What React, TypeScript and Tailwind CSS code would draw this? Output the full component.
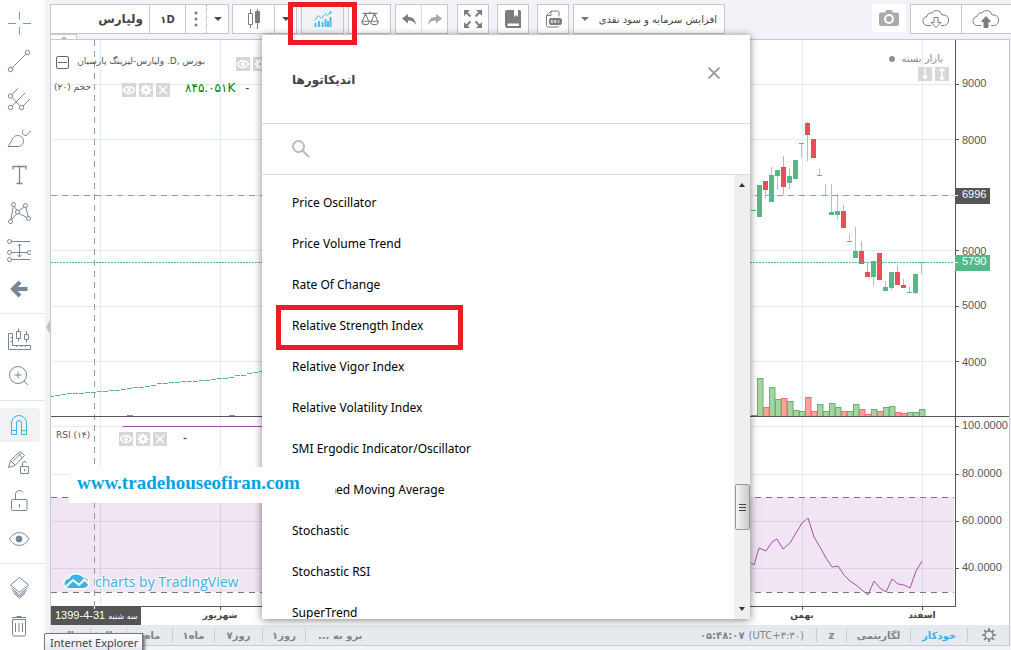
import React from "react";

type Candle = [body: [number, number], wick: [number, number] | null, up: boolean];

const candles: Candle[] = [
  [[210, 211], null, true],
  [[185, 217], null, true],
  [[181, 190], [181, 198], false],
  [[175, 202], [167, 202], true],
  [[170, 176], [170, 190], true],
  [[167, 187], [156, 195], false],
  [[176, 183], [168, 189], true],
  [[160, 179], null, true],
  [[143, 144], [143, 158], true],
  [[123, 135], [122, 161], false],
  [[139, 158], null, false],
  [[175, 176], [168, 176], true],
  [[195, 196], [184, 196], true],
  [[212, 215], [184, 215], true],
  [[211, 215], [194, 220], true],
  [[211, 228], [205, 228], false],
  [[241, 242], [234, 242], true],
  [[251, 258], [227, 258], true],
  [[251, 264], [241, 264], false],
  [[272, 277], [263, 277], false],
  [[261, 277], [261, 286], true],
  [[253, 280], null, false],
  [[287, 291], [281, 291], true],
  [[272, 288], [272, 290], true],
  [[272, 285], [266, 285], false],
  [[285, 288], [279, 288], false],
  [[292, 293], [287, 293], true],
  [[274, 293], [274, 294], true],
  [[262, 263], [262, 274], true],
];

const volumes: [number, boolean][] = [
  [415, true], [378, true], [407, false], [387, true], [399, true], [398, false], [401, true],
  [410, true], [411, true], [397, false], [411, false], [404, true], [411, true], [403, true],
  [407, true], [411, false], [411, true], [404, true], [409, false], [414, false], [409, true],
  [411, false], [407, true], [406, true], [412, false], [413, false], [412, true], [412, true],
  [409, true],
];

const trend = [
  396, 395, 394, 393, 393, 393, 392, 392, 391, 391, 390, 390, 389, 388, 387, 387, 386, 385, 383, 383,
  382, 382, 381, 381, 381, 380, 380, 379, 378, 378, 377, 375, 375, 373, 372, 371,
];

const rsi: [number, number][] = [
  [751, 563], [754, 565], [759, 548], [766, 551], [772, 542], [777, 539], [783, 549], [790, 543],
  [796, 533], [802, 523], [808, 518], [814, 537], [820, 547], [826, 558], [832, 567], [838, 566],
  [844, 575], [850, 581], [856, 585], [862, 590], [868, 595], [874, 581], [880, 588], [886, 592],
  [892, 579], [898, 584], [904, 585], [910, 588], [916, 571], [922, 561],
];

const indicators = [
  "Price Oscillator",
  "Price Volume Trend",
  "Rate Of Change",
  "Relative Strength Index",
  "Relative Vigor Index",
  "Relative Volatility Index",
  "SMI Ergodic Indicator/Oscillator",
  "Smoothed Moving Average",
  "Stochastic",
  "Stochastic RSI",
  "SuperTrend",
];

const fa = "font-['DejaVu_Sans',sans-serif]";

function Chart() {
  return (
    <svg
      viewBox="51 40 958 585"
      preserveAspectRatio="xMinYMin slice"
      className="block h-full w-full"
      role="img"
      aria-label="Price chart"
    >
      <g fill="#e0ebf2">
        {[100, 220, 802, 922].map((x) => (
          <rect key={x} x={x} y="40" width="1" height="565" />
        ))}
        {[84, 139, 195, 250, 306, 361, 426, 474, 521, 568].map((y) => (
          <rect key={y} x="52" y={y} width="901" height="1" />
        ))}
      </g>
      <rect x="51" y="497" width="903" height="95" fill="#96329f" fillOpacity="0.13" />
      <g stroke="#777" strokeDasharray="6 5">
        <path d="M51 497.5H954" />
        <path d="M51 592.5H954" />
      </g>
      {trend.map((y, i) => (
        <rect key={i} x={49 + i * 6} y={y} width="5" height="1" fill="#53b987" />
      ))}
      <g fill="#69b269">
        <rect x="127" y="415" width="6" height="1" />
        <rect x="229" y="415" width="6" height="1" />
      </g>
      {volumes.map(([y, up], i) => (
        <rect
          key={i}
          x={751.5 + i * 6}
          y={y + 0.5}
          width="5.5"
          height={416 - y}
          fill={up ? "#a6d3a6" : "#ff9f9f"}
          stroke={up ? "#69b269" : "#ff6b6b"}
        />
      ))}
      {candles.map(([body, wick, up], i) => (
        <g key={i}>
          {wick && (
            <rect
              x={753 + i * 6}
              y={wick[0]}
              width="1"
              height={wick[1] - wick[0]}
              fill={up ? "#a4c9cc" : "#f0a0ac"}
            />
          )}
          <rect
            x={751 + i * 6}
            y={body[0]}
            width="5"
            height={body[1] - body[0]}
            fill={up ? "#53b987" : "#eb4d5c"}
          />
        </g>
      ))}
      <path d="M51 262.5H954" stroke="#53b987" strokeDasharray="2 1" />
      <g stroke="#999" strokeDasharray="6 5">
        <path d="M51 195.5H954" />
        <path d="M94.5 40V606" />
      </g>
      <rect x="123" y="426" width="140" height="1" fill="#a24aa8" />
      <polyline points={rsi.map((p) => p.join(",")).join(" ")} fill="none" stroke="#a94fb0" />
      <g fill="#555">
        <rect x="51" y="416" width="958" height="1" />
        <rect x="51" y="606" width="905" height="1" />
        <rect x="955" y="40" width="1" height="567" />
        {[84, 139, 250, 306, 361, 426, 474, 521, 568].map((y) => (
          <rect key={y} x="956" y={y} width="3" height="1" />
        ))}
        {[220, 802, 922].map((x) => (
          <rect key={x} x={x} y="607" width="1" height="3" />
        ))}
        <rect x="955" y="188" width="35" height="16" />
        <rect x="51" y="606" width="90" height="19" />
      </g>
      <rect x="955" y="255" width="35" height="16" fill="#53b987" />
      <g fill="#fff">
        <rect x="955" y="195" width="3" height="1" />
        <rect x="955" y="262" width="3" height="1" />
        <rect x="94" y="606" width="1" height="3" />
      </g>
      <g fontFamily="Liberation Sans, sans-serif" fontSize="11" fill="#555">
        {[
          ["9000", 87], ["8000", 144], ["6000", 255], ["5000", 309], ["4000", 366],
          ["100.0000", 429], ["80.0000", 477], ["60.0000", 524], ["40.0000", 571],
        ].map(([t, y]) => (
          <text key={t} x="962" y={y}>{t}</text>
        ))}
        <text x="962" y="198" fill="#fff">6996</text>
        <text x="962" y="265" fill="#fff">5790</text>
        <text x="55" y="619" fill="#fff">1399-4-31</text>
      </g>
      <g fontFamily="DejaVu Sans, sans-serif" fontSize="10" textAnchor="middle" fill="#444">
        <text x="123" y="619" fontSize="8" fill="#fff">سه شنبه</text>
        <g fontWeight="bold" fontSize="9">
          <text x="220" y="618">شهریور</text>
          <text x="802" y="618">بهمن</text>
          <text x="922" y="618">اسفند</text>
        </g>
      </g>
      <g stroke="#fff" strokeWidth="3" strokeLinejoin="round" paintOrder="stroke" fill="#3bb3e4">
        <path d="M69 588a4.500 4.500 0 0 1 0-9 8 7 0 0 1 14-1.500 5.300 5.300 0 0 1 1 10.500z" />
        <text x="95" y="587" fontFamily="Open Sans, sans-serif" fontSize="14" strokeOpacity="0.5">
          charts by TradingView
        </text>
      </g>
      <path d="M66 586.500l7-6.500 6 5 5.500-5.500 4 4" fill="none" stroke="#fff" strokeWidth="2" />
    </svg>
  );
}

type IconProps = { children: React.ReactNode; className?: string };

function Icon({ children, className = "h-6 w-6" }: IconProps) {
  return (
    <svg viewBox="0 0 24 24" fill="none" stroke="currentColor" className={className} aria-hidden="true">
      {children}
    </svg>
  );
}

function Tool({ label, active, children }: { label: string; active?: boolean; children: React.ReactNode }) {
  return (
    <button
      type="button"
      aria-label={label}
      className={
        active
          ? "flex h-[34px] w-10 items-center justify-center rounded-r-sm bg-[#f1f2f4] my-0.5 pr-0.5 text-[#3bb3e4]"
          : "flex h-[38px] w-10 items-center justify-center pr-0.5 text-[#758696]"
      }
    >
      <Icon>{children}</Icon>
    </button>
  );
}

function Divider() {
  return <div className="my-[5px] h-px bg-[#dfe8ef]" />;
}

function Sidebar() {
  return (
    <aside className="flex w-[45px] shrink-0 flex-col bg-white pt-1">
      <Tool label="Cross">
        <path d="M12.500 .5v8M12.500 16v8M1 12.500h8M16 12.500h8" stroke="#3bb3e4" />
      </Tool>
      <Tool label="Trend line">
        <circle cx="3.500" cy="20.500" r="2.200" />
        <circle cx="20.500" cy="3.500" r="2.200" />
        <path d="M5.200 18.800L18.800 5.200" />
      </Tool>
      <Tool label="Pitchfork">
        <circle cx="3.500" cy="9" r="2.200" />
        <circle cx="3.500" cy="20.500" r="2.200" />
        <circle cx="14.500" cy="20.500" r="2.200" />
        <path d="M5.200 7.200L11.500 1M5.200 10.700l7.600 8M5.200 18.800L18 6M16.200 18.800L23 12" />
      </Tool>
      <Tool label="Brush">
        <path d="M1 21.500C5 17 5 10.500 10.500 10.500a5.500 5.500 0 0 1 1 11zM16 5.500c-2 2 .5 5.500 3 5l6.500-6M16 5.500l1-1" />
      </Tool>
      <Tool label="Text">
        <path d="M6 6.500V3.500h13v3M12.500 3.500v17M9.500 20.500h6" strokeWidth="1.300" />
      </Tool>
      <Tool label="Patterns">
        <circle cx="6.500" cy="3.500" r="2" />
        <circle cx="18.500" cy="4.500" r="2" />
        <circle cx="10.500" cy="11" r="2" />
        <circle cx="3.500" cy="20.500" r="2" />
        <circle cx="21.500" cy="17.500" r="2" />
        <path d="M6.200 5.500L4 18.500M7.500 5.300l2.200 4M12 9.700l5-4M18.900 6.500l2.200 9M12 12.500l7.800 4M9.600 12.700l-5 6" />
      </Tool>
      <Tool label="Forecasting">
        <circle cx="2.500" cy="2.500" r="2" />
        <circle cx="2.500" cy="13.500" r="2" />
        <circle cx="22.500" cy="13.500" r="2" />
        <circle cx="2.500" cy="20.500" r="2" />
        <path d="M4.500 2.500H23M4.500 13.500h16M4.500 20.500H23M12.500 5v13M10.500 7l2-2 2 2M10.500 16l2 2 2-2" />
      </Tool>
      <Tool label="Back">
        <path d="M13 5l-7 7 7 7M7 12h13.500" strokeWidth="4" />
      </Tool>
      <Divider />
      <Tool label="Measure">
        <path d="M1.500 7.500h4v12h18v4h-22zM3.500 11.500h2M3.500 15.500h2M9.500 21v-2M14.500 21v-2M18.500 21v-2M9.500 5.500h4v7h-4zM11.500 2.500v3M11.500 12.500v3M17.500 8.500h4v5h-4zM19.500 5v3.500M19.500 13.500v3" />
      </Tool>
      <Tool label="Zoom in">
        <circle cx="11" cy="11" r="8.500" />
        <path d="M11 7.500v7M7.500 11h7M17 17l4 4" />
      </Tool>
      <Divider />
      <Tool label="Magnet" active>
        <path d="M4.500 21.500V10a7.500 7.500 0 0 1 15 0v11.500h-5V10a2.500 2.500 0 0 0-5 0v11.500zM4.500 17.500h5M14.500 17.500h5" />
      </Tool>
      <Tool label="Keep drawing">
        <path d="M1.500 16.500l2-7L13 .5l4.500 4-9.500 10zM3.500 9.500L8 14M11 2.500L15.500 7M6 10l8-7.500" />
        <path d="M13.500 15.500h8v7h-8zM15.500 15.500V13a2 2 0 0 1 4-1M17.500 18v2" />
      </Tool>
      <Tool label="Lock">
        <rect x="4.500" y="10.500" width="15.500" height="11" rx="1" />
        <path d="M8.500 10.500V5a4 4 0 0 1 7.500-1.500M12.500 15v3.500" />
      </Tool>
      <Tool label="Hide">
        <path d="M2.500 12c5-8.500 14.500-8.500 19.500 0-5 8.500-14.500 8.500-19.500 0z" />
        <circle cx="12" cy="12" r="3" fill="currentColor" />
      </Tool>
      <Divider />
      <Tool label="Object tree">
        <path d="M12.500 1.500l9 7.500-9 7.500-9-7.500zM4.500 12l8 7 8-7M5.500 14.500l7 6 7-6M6.500 17l6 5 6-5" />
      </Tool>
      <Tool label="Remove">
        <path d="M5.500 5.500h13v15a1.500 1.500 0 0 1-1.500 1.500H7a1.500 1.500 0 0 1-1.500-1.500zM5 3.500h14M9.500 2.500h5M8.500 9v9M12 9v9M15.500 9v9" />
      </Tool>
    </aside>
  );
}

const frame = "flex h-[30px] border border-[#c6c9cc]";
const box = `${frame} items-stretch bg-white text-[#7d7d7d]`;
const single = `${frame} items-center justify-center`;
const cell = "flex items-center justify-center";

function Caret({ className = "border-t-[#4a4a4a]" }: { className?: string }) {
  return <span className={"h-0 w-0 border-x-4 border-t-4 border-x-transparent " + className} />;
}

function Toolbar() {
  return (
    <header className="flex h-[39px] shrink-0 items-start pt-1">
      <div className={box + " w-[179px]"}>
        <button type="button" dir="rtl" className={`${fa} flex flex-1 items-center pr-1.5 text-xs font-bold text-[#444]`}>
          ولپارس
        </button>
        <button type="button" className={`${cell} ${fa} w-9 border-l border-[#c6c9cc] text-[10px] font-bold text-[#444]`}>
          ۱D
        </button>
        <button type="button" aria-label="More intervals" className={cell + " w-[21px] border-l border-[#c6c9cc]"}>
          <svg viewBox="0 0 4 16" className="h-4 w-1" fill="currentColor" aria-hidden="true">
            <circle cx="2" cy="2" r="1.500" />
            <circle cx="2" cy="8" r="1.500" />
            <circle cx="2" cy="14" r="1.500" />
          </svg>
        </button>
        <button type="button" aria-label="Intervals" className={cell + " w-[22px] border-l border-dotted border-[#aaa]"}>
          <Caret />
        </button>
      </div>
      <div className={box + " ml-[3px] w-[65px]"}>
        <button type="button" aria-label="Chart style" className={cell + " flex-1"}>
          <Icon>
            <path d="M8.500 2v4M8.500 18v3M15.500 2v20" />
            <path d="M6.500 6.500h4v11h-4z" />
            <path d="M13.500 4.500h4v11h-4z" fill="currentColor" />
          </Icon>
        </button>
        <button type="button" aria-label="Chart styles" className={cell + " w-[22px] border-l border-[#c6c9cc]"}>
          <Caret />
        </button>
      </div>
      <button type="button" aria-label="Indicators" className={single + " ml-1 w-[43px] bg-[#f1f3f6] text-[#4cbcec]"}>
        <svg viewBox="0 0 18 16" className="h-4 w-[18px]" fill="none" stroke="currentColor" aria-hidden="true">
          <path d="M1.500 12v4M5 10v6M8.500 11v5M11.500 8v8M14 10v6M16.500 6v10" strokeWidth="2" />
          <path d="M.5 9.500l4-5 3 3 4-5 2 2 3-3.500" />
          <circle cx="16.500" cy="1.500" r="1" />
        </svg>
      </button>
      <button type="button" aria-label="Compare" className={single + " ml-1 w-[43px] bg-white text-[#7d7d7d]"}>
        <Icon className="h-[18px] w-[18px]">
          <path d="M12 2v3M2 4.500h20M6 5L1.500 15.500M6 5l4.500 10.500M18 5l-4.500 10.500M18 5l4.500 10.500" strokeWidth="1.400" />
          <path d="M1 15h10c0 6-10 6-10 0zM13 15h10c0 6-10 6-10 0z" strokeWidth="1.400" />
        </Icon>
      </button>
      <div className={box + " ml-1 w-[53px]"}>
        <button type="button" aria-label="Undo" className={cell + " flex-1"}>
          <svg viewBox="0 0 14 11" className="h-[11px] w-[14px]" fill="currentColor" aria-hidden="true">
            <path d="M0 4.500L6 0v3c5 0 7.500 2.500 8 8-2-3.500-4-4.500-8-4.500V9.500z" />
          </svg>
        </button>
        <button type="button" aria-label="Redo" className={cell + " flex-1 border-l border-[#dcdee0] text-[#a8a8a8]"}>
          <svg viewBox="0 0 14 11" className="h-[11px] w-[14px]" fill="currentColor" aria-hidden="true">
            <path d="M14 4.500L8 0v3c-5 0-7.500 2.500-8 8 2-3.500 4-4.500 8-4.500V9.500z" />
          </svg>
        </button>
      </div>
      <button type="button" aria-label="Full screen" className={single + " ml-[9px] w-8 bg-white text-[#7d7d7d]"}>
        <svg viewBox="0 0 18 18" className="h-[18px] w-[18px]" fill="currentColor" stroke="currentColor" aria-hidden="true">
          <path d="M0 0h6l-6 6zM18 0v6l-6-6zM0 18v-6l6 6zM18 18h-6l6-6z" stroke="none" />
          <path d="M2 2l4.500 4.500M16 2l-4.500 4.500M2 16l4.500-4.500M16 16l-4.500-4.500" strokeWidth="2" />
        </svg>
      </button>
      <button type="button" aria-label="Study templates" className={single + " ml-2 w-8 bg-white text-[#7d7d7d]"}>
        <svg viewBox="0 0 18 18" className="h-[18px] w-[18px]" aria-hidden="true">
          <path d="M3 0h7v7l2-2 2 2V0h1.500A1.500 1.500 0 0 1 17 1.500V18H3a2 2 0 0 1-2-2V2a2 2 0 0 1 2-2z" fill="currentColor" />
          <path d="M3.500 13.500H15v2.500H3.500z" fill="#fff" />
        </svg>
      </button>
      <button type="button" aria-label="Export data" className={single + " ml-2 w-8 bg-white text-[#7d7d7d]"}>
        <svg viewBox="0 0 18 18" className="h-[18px] w-[18px]" fill="none" stroke="currentColor" aria-hidden="true">
          <path d="M15 6.500V2.500a1.500 1.500 0 0 0-1.500-1.500H7L2.500 5.500v10A1.500 1.500 0 0 0 4 17h9.500a1.500 1.500 0 0 0 1.500-1M7 1v4.500H2.500" />
          <rect x="5.500" y="8.500" width="12" height="6" rx="1.500" fill="currentColor" />
          <path d="M9 10.500H7v2h2v-1M12 10.500h-1.500v1H12v1h-1.500M13.500 10.500l1 2 1-2" stroke="#fff" strokeWidth=".7" />
        </svg>
      </button>
      <button type="button" className={`${frame} ml-1 w-[152px] items-center justify-between bg-white px-[7px] text-[#444]`}>
        <Caret className="border-t-[#777]" />
        <span dir="rtl" className={`${fa} text-[10px] whitespace-nowrap`}>افزایش سرمایه و سود نقدی</span>
      </button>
      <button type="button" aria-label="Take a snapshot" className={`${cell} ml-auto h-7 w-[34px] bg-white text-[#aaa]`}>
        <svg viewBox="0 0 20 16" className="h-4 w-5" aria-hidden="true">
          <path d="M2 2.500h4L7.500 0h5L14 2.500h4a2 2 0 0 1 2 2V14a2 2 0 0 1-2 2H2a2 2 0 0 1-2-2V4.500a2 2 0 0 1 2-2z" fill="currentColor" />
          <circle cx="10" cy="9" r="4" fill="none" stroke="#fff" strokeWidth="2" />
        </svg>
      </button>
      <div className="ml-1 flex h-[30px] w-[101px] items-stretch border-y border-l border-[#c6c9cc] bg-white text-[#7d7d7d]">
        <button type="button" aria-label="Load chart" className={cell + " flex-1"}>
          <svg viewBox="0 0 28 20" className="h-5 w-7" fill="none" stroke="currentColor" aria-hidden="true">
            <path d="M9 16.500H6a4.500 4.500 0 0 1-1-9 4 4 0 0 1 5-3.500 5.500 5.500 0 0 1 10 2 5 5 0 0 1 2.500 10.500H19" />
            <path d="M12 8.500h4v5h3l-5 5-5-5h3z" />
          </svg>
        </button>
        <button type="button" aria-label="Save chart" className={cell + " flex-1 border-l border-[#c6c9cc]"}>
          <svg viewBox="0 0 28 20" className="h-5 w-7" fill="none" stroke="currentColor" aria-hidden="true">
            <path d="M9 16.500H6a4.500 4.500 0 0 1-1-9 4 4 0 0 1 5-3.500 5.500 5.500 0 0 1 10 2 5 5 0 0 1 2.500 10.500H19" />
            <path d="M12 18.500v-6H9.500l4.500-5 4.500 5H16v6z" fill="currentColor" />
          </svg>
        </button>
      </div>
    </header>
  );
}

const chip = "flex h-[14px] w-[14px] items-center justify-center bg-[#d7d7d7] text-white";

function StudyButtons({ count = 3 }: { count?: number }) {
  return (
    <div className="flex gap-[3px]">
      <button type="button" aria-label="Hide" className={chip}>
        <Icon className="h-3 w-3">
          <path d="M1 12c5-9 17-9 22 0-5 9-17 9-22 0z" strokeWidth="3" />
          <circle cx="12" cy="12" r="3" fill="currentColor" strokeWidth="2" />
        </Icon>
      </button>
      <button type="button" aria-label="Settings" className={chip}>
        <Icon className="h-3 w-3">
          <circle cx="12" cy="12" r="5.500" strokeWidth="5" />
          <path d="M12 1v5M12 18v5M1 12h5M18 12h5M4.200 4.200l3.500 3.500M16.300 16.300l3.500 3.500M4.200 19.800l3.500-3.500M16.300 7.700l3.500-3.500" strokeWidth="4" />
        </Icon>
      </button>
      {count > 2 && (
        <button type="button" aria-label="Remove" className={chip}>
          <Icon className="h-3 w-3">
            <path d="M4 4l16 16M20 4L4 20" strokeWidth="3" />
          </Icon>
        </button>
      )}
    </div>
  );
}

function Legend() {
  return (
    <>
      <div className="absolute top-[15px] left-[5px] flex flex-col gap-3 text-[#555]">
        <div className="flex h-[14px] items-center">
          <button type="button" aria-label="Collapse" className="flex h-[13px] w-[13px] items-center justify-center rounded-[2px] border border-[#666]">
            <span className="h-px w-[9px] bg-[#666]" />
          </button>
          <span dir="rtl" className={`${fa} ml-1 w-[132px] text-[9px] whitespace-nowrap`}>
            بورس ,D. ولپارس-لیزینگ پارسیان
          </span>
          <div className="ml-[31px] pt-1">
            <StudyButtons count={2} />
          </div>
        </div>
        <div className="flex h-[14px] items-center">
          <span dir="rtl" className={`${fa} w-[35px] text-[9px] whitespace-nowrap`}>حجم (۲۰)</span>
          <div className="ml-[31px] pt-1">
            <StudyButtons />
          </div>
          <span className={`${fa} ml-[15px] text-xs text-[#008000]`}>۸۴۵.۰۵۱K</span>
          <span className="ml-2.5 text-xs text-[#444]">-</span>
        </div>
      </div>
      <div className="absolute top-[388px] left-[5px] flex h-4 items-center text-[#555]">
        <span className={`${fa} w-[35px] text-[9px] whitespace-nowrap`}>RSI (۱۴)</span>
        <div className="ml-7 pt-1.5">
          <StudyButtons />
        </div>
        <span className="ml-4 pt-1 text-xs text-[#800080]">-</span>
      </div>
      <div className="absolute top-3 right-[60px] flex flex-col items-end gap-px text-[#8a8a8a]">
        <div className="flex items-center gap-1.5">
          <span className="h-1.5 w-1.5 rounded-full bg-[#909090]" />
          <span dir="rtl" className={`${fa} pr-1.5 text-[10px] leading-[14px]`}>بازار بسته</span>
        </div>
        <div className="flex gap-[3px]">
          <button type="button" aria-label="Move pane down" className={chip}>
            <Icon className="h-3 w-3"><path d="M12 1v20M7 16l5 5 5-5" strokeWidth="3" /></Icon>
          </button>
          <button type="button" aria-label="Maximize pane" className={chip}>
            <Icon className="h-3 w-3"><path d="M12 1v22M7 6l5-5 5 5M7 18l5 5 5-5" strokeWidth="3" /></Icon>
          </button>
        </div>
      </div>
    </>
  );
}

const ranges: [string, string][] = [
  ["سال۵", "w-10"],
  ["سال۱", "w-9 border-l"],
  ["ماه۶", "w-[46px] border-l"],
  ["ماه۱", "w-[42px] border-l"],
  ["روز۷", "w-12 border-l"],
  ["روز۱", "w-[44px] border-x"],
];

function Footer() {
  const item = "flex h-[14px] items-center justify-center border-r border-[#c9ccd1]";
  return (
    <footer className={`${fa} flex h-[21px] shrink-0 items-center border-b border-[#c9cbd0] bg-[#e6e9ee] text-[10px] font-bold text-[#858585]`}>
      {ranges.map(([label, width]) => (
        <button key={label} type="button" dir="rtl" className={`flex h-[14px] items-center justify-center border-[#c9ccd1] font-bold ${width}`}>
          {label}
        </button>
      ))}
      <button type="button" dir="rtl" className="ml-3 font-bold">برو به ...</button>
      <div className="ml-auto flex items-center">
        <span className={item + " gap-1 pr-3"}>
          <span>۰۵:۴۸:۰۷</span>
          <span className="font-normal">(UTC+۳:۳۰)</span>
        </span>
        <button type="button" className={item + " w-[30px]"}>z</button>
        <button type="button" className={item + " w-16"}>لگاریتمی</button>
        <button type="button" className={item + " w-[57px] text-[#3bb3e4]"}>خودکار</button>
        <button type="button" aria-label="Chart settings" className="flex w-[41px] items-center justify-center">
          <Icon className="h-[14px] w-[14px]">
            <circle cx="12" cy="12" r="7" strokeWidth="2.500" />
            <path d="M12 0v5M12 19v5M0 12h5M19 12h5M3.500 3.500l3.500 3.500M17 17l3.500 3.500M3.500 20.500L7 17M17 7l3.500-3.500" strokeWidth="3" />
          </Icon>
        </button>
      </div>
    </footer>
  );
}

function IndicatorsDialog() {
  return (
    <div
      role="dialog"
      aria-labelledby="dialog-title"
      className="absolute top-[35px] right-[261px] bottom-[31px] left-[262px] z-10 flex flex-col bg-white shadow-[0_1px_8px_rgba(0,0,0,0.5)]"
    >
      <div className="flex h-[89px] shrink-0 items-center justify-between border-b border-[#dcdcdc] px-[30px]">
        <h2 id="dialog-title" dir="rtl" className={`${fa} pt-0.5 text-xs font-bold text-[#444]`}>اندیکاتورها</h2>
        <button type="button" aria-label="Close" className="mb-3 text-[#999]">
          <svg viewBox="0 0 12 12" className="h-3 w-3" stroke="currentColor" strokeWidth="1.800" aria-hidden="true">
            <path d="M.5 .5l11 11M11.500 .5l-11 11" />
          </svg>
        </button>
      </div>
      <label className="flex h-[51px] shrink-0 items-center gap-2 border-b border-[#dcdcdc] pl-[30px] text-[#bbb]">
        <svg viewBox="0 0 18 18" className="h-[18px] w-[18px]" fill="none" stroke="currentColor" strokeWidth="2" aria-hidden="true">
          <circle cx="6.500" cy="6.500" r="5.500" />
          <path d="M10.500 10.500l6.500 6.500" />
        </svg>
        <input type="text" aria-label="Search" className="h-8 flex-1 text-sm text-black outline-none" />
      </label>
      <div className="flex min-h-0 flex-1">
        <ul className="flex-1 overflow-hidden pt-[7px] text-xs text-black font-['Noto_Sans',sans-serif]">
          {indicators.map((name) => (
            <li key={name}>
              <button type="button" className="flex h-[41px] w-full items-center pl-[30px]">{name}</button>
            </li>
          ))}
        </ul>
        <div className="flex w-4 flex-col items-center bg-[#efefef] py-2" aria-hidden="true">
          <span className="h-0 w-0 border-x-[3px] border-b-4 border-x-transparent border-b-[#333]" />
          <div className="flex-[297]" />
          <div className="flex h-[46px] w-[15px] flex-col items-center justify-center gap-0.5 rounded-[2px] border border-[#979797] bg-linear-to-r from-[#f5f5f5] to-[#c9cacd]">
            <span className="h-px w-[7px] bg-[#444]" />
            <span className="h-px w-[7px] bg-[#444]" />
            <span className="h-px w-[7px] bg-[#444]" />
          </div>
          <div className="flex-[77]" />
          <span className="h-0 w-0 border-x-[3px] border-t-4 border-x-transparent border-t-[#333]" />
        </div>
      </div>
    </div>
  );
}

export default function App() {
  return (
    <div className="relative flex h-screen overflow-hidden bg-[#f1f3f8] font-['Liberation_Sans',sans-serif]">
      <Sidebar />
      <main className="flex min-w-0 flex-1 flex-col pb-1 pl-[5px]">
        <Toolbar />
        <section className="relative mr-px min-h-0 flex-1 border border-b-0 border-[#c6c9cc] bg-white">
          <Chart />
          <Legend />
          <button type="button" aria-label="Expand header" className="absolute -top-1.5 -left-px flex h-[6px] w-[27px] items-center justify-center border border-[#c6c9cc] bg-white">
            <span className="h-0 w-0 border-x-[3px] border-b-[3px] border-x-transparent border-b-[#bbb]" />
          </button>
          <span className="absolute top-[280px] -left-[5px] h-0 w-0 border-y-[7px] border-r-4 border-y-transparent border-r-[#c4c4c4]" />
        </section>
        <div className="mr-px border-r border-[#c6c9cc]">
          <Footer />
        </div>
      </main>
      <IndicatorsDialog />
      <div className="absolute top-0.5 left-[288px] z-20 h-[43px] w-[69px] border-5 border-[#ed1c24]" />
      <div className="absolute top-[305px] left-[276px] z-20 h-[45px] w-[187px] border-5 border-[#ed1c24]" />
      <a href="http://www.tradehouseofiran.com" className="absolute top-[467px] left-[69px] z-20 flex h-9 w-[266px] items-center bg-white pb-1 pl-2 font-['Liberation_Serif',serif] text-[19px] font-bold text-[#00a2e8]">
        www.tradehouseofiran.com
      </a>
      <div role="tooltip" className="absolute top-[633px] left-[44px] z-20 h-5 w-[99px] rounded-[2px] border border-[#767676] bg-linear-to-b from-white to-[#e4e5f0] pl-[5px] font-['Noto_Sans',sans-serif] text-[11px] leading-[18px] whitespace-nowrap text-[#444] shadow-[2px_2px_3px_rgba(0,0,0,0.5)]">
        Internet Explorer
      </div>
    </div>
  );
}
